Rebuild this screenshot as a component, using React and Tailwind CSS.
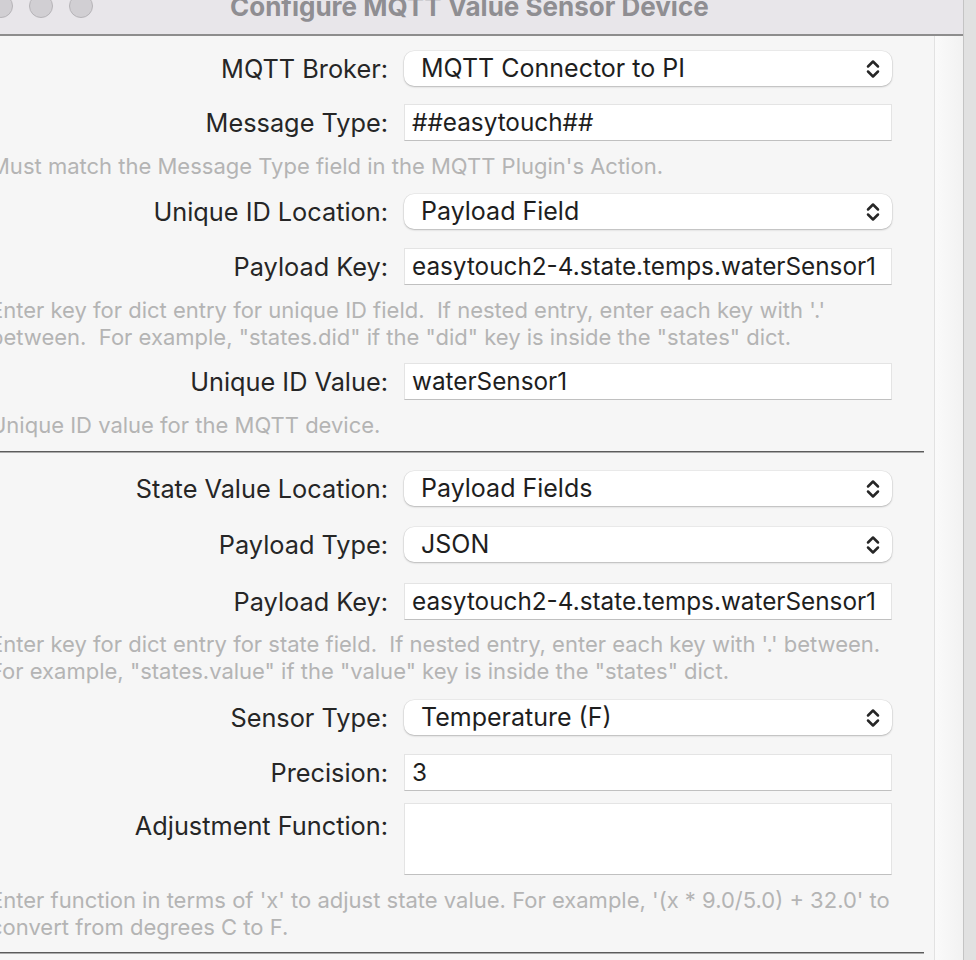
const font = { fontFamily: "Inter, 'Liberation Sans', sans-serif" };

function Chevrons() {
  return (
    <svg width="16" height="22" viewBox="0 0 16 22" fill="none" stroke="#262626" strokeWidth="2.5" strokeLinecap="round" strokeLinejoin="round">
      <path d="M3 8.5 8 3.5l5 5" />
      <path d="M3 13.5 8 18.5l5-5" />
    </svg>
  );
}

function Popup({ value }) {
  return (
    <div className="h-[35px] w-[488px] rounded-[10px] bg-white shadow-[0_0_0_0.5px_rgba(0,0,0,0.08),0_1px_2px_rgba(0,0,0,0.22)] flex items-center justify-between pl-[17px] pr-[11px]">
      <span className="text-[25px] text-[#1e1e1e]">{value}</span>
      <Chevrons />
    </div>
  );
}

function Field({ value, tall }) {
  return (
    <div
      className={
        "w-[488px] bg-white border border-[#e4e4e4] border-b-[#c0c0c0] flex pl-[7px] " +
        (tall ? "h-[72px] items-start" : "h-[37px] items-center")
      }
    >
      <span className="text-[24.3px] text-[#1e1e1e]">{value}</span>
    </div>
  );
}

function Row({ label, className, top, children }) {
  return (
    <div className={"flex " + (top ? "items-start " : "items-center ") + className}>
      <div className={"w-[398px] text-right text-[25.3px] leading-[32px] text-[#262626] " + (top ? "pt-[7px]" : "")}>
        {label}
      </div>
      <div className="ml-[16px]">{children}</div>
    </div>
  );
}

function Help({ lines, className }) {
  return (
    <div className={"text-[22px] leading-[27px] text-[#b4b4b4] whitespace-pre " + className}>
      {lines.map((l) => (
        <div key={l}>{l}</div>
      ))}
    </div>
  );
}

function Separator({ className }) {
  return <div className={"w-[934px] border-t border-t-[#5c5c5c] border-b border-b-[#ababab] " + className} />;
}

export default function App() {
  return (
    <div className="w-[976px] h-[960px] overflow-hidden bg-[#e1e1e1] flex" style={font}>
      <div className="w-[964px] h-full flex flex-col border-r border-[#c4c4c4]">
        {/* Title bar */}
        <div className="h-[36px] shrink-0 bg-[#e8e6ea] border-b-2 border-[#8d8d8d] flex items-start overflow-hidden">
          <div className="flex gap-[16px] -ml-[11px] -mt-[6px]">
            <div className="w-[24px] h-[24px] rounded-full bg-[#d1cfd3] border border-[#b6b4b8]" />
            <div className="w-[24px] h-[24px] rounded-full bg-[#d1cfd3] border border-[#b6b4b8]" />
            <div className="w-[24px] h-[24px] rounded-full bg-[#d1cfd3] border border-[#b6b4b8]" />
          </div>
          <div className="ml-[137px] -mt-[13px] text-[26px] font-bold text-[#8f8e92] whitespace-nowrap">
            Configure MQTT Value Sensor Device
          </div>
        </div>

        {/* Body */}
        <div className="flex flex-1 bg-[#f6f6f6]">
          <div className="w-[934px] overflow-hidden">
            <div className="-ml-[10px] flex flex-col">
              <Row label="MQTT Broker:" className="mt-[15px]">
                <Popup value="MQTT Connector to PI" />
              </Row>
              <Row label="Message Type:" className="mt-[18px]">
                <Field value="##easytouch##" />
              </Row>
              <Help className="mt-[12px]" lines={["Must match the Message Type field in the MQTT Plugin's Action."]} />
              <Row label="Unique ID Location:" className="mt-[14px]">
                <Popup value="Payload Field" />
              </Row>
              <Row label="Payload Key:" className="mt-[19px]">
                <Field value="easytouch2-4.state.temps.waterSensor1" />
              </Row>
              <Help
                className="mt-[12px]"
                lines={[
                  "Enter key for dict entry for unique ID field.  If nested entry, enter each key with '.'",
                  'between.  For example, "states.did" if the "did" key is inside the "states" dict.',
                ]}
              />
              <Row label="Unique ID Value:" className="mt-[12px]">
                <Field value="waterSensor1" />
              </Row>
              <Help className="mt-[12px]" lines={["Unique ID value for the MQTT device."]} />
              <Separator className="mt-[12px]" />

              <Row label="State Value Location:" className="mt-[18px]">
                <Popup value="Payload Fields" />
              </Row>
              <Row label="Payload Type:" className="mt-[21px]">
                <Popup value="JSON" />
              </Row>
              <Row label="Payload Key:" className="mt-[21px]">
                <Field value="easytouch2-4.state.temps.waterSensor1" />
              </Row>
              <Help
                className="mt-[11px]"
                lines={[
                  "Enter key for dict entry for state field.  If nested entry, enter each key with '.' between.",
                  'For example, "states.value" if the "value" key is inside the "states" dict.',
                ]}
              />
              <Row label="Sensor Type:" className="mt-[15px]">
                <Popup value="Temperature (F)" />
              </Row>
              <Row label="Precision:" className="mt-[19px]">
                <Field value="3" />
              </Row>
              <Row label="Adjustment Function:" className="mt-[12px]" top>
                <Field value="" tall />
              </Row>
              <Help
                className="mt-[12px]"
                lines={[
                  "Enter function in terms of 'x' to adjust state value. For example, '(x * 9.0/5.0) + 32.0' to",
                  "convert from degrees C to F.",
                ]}
              />
              <Separator className="mt-[11px]" />
            </div>
          </div>
          <div className="w-[29px] border-l border-[#e2e2e2] bg-gradient-to-r from-[#fafafa] to-[#f2f2f2]" />
        </div>
      </div>
    </div>
  );
}
